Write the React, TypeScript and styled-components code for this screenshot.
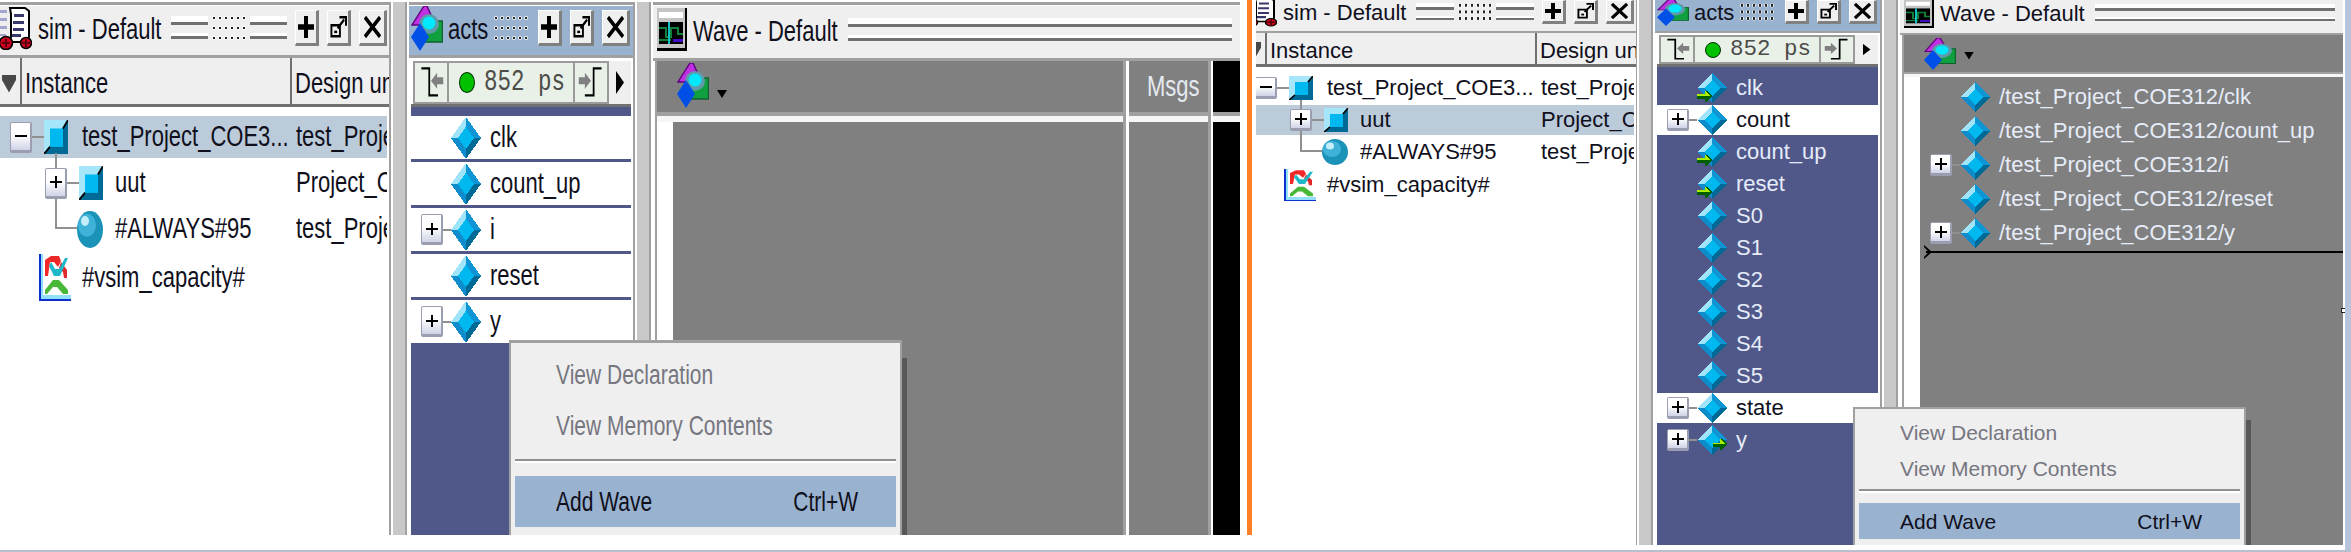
import styled, { createGlobalStyle } from 'styled-components';

const GlobalStyle = createGlobalStyle`
  html, body {
    margin: 0;
    background: #fff;
    overflow: hidden;
  }
  * {
    box-sizing: border-box;
  }
`;

const Root = styled.div`
  width: 2351px;
  height: 552px;
  display: flex;
  flex-direction: column;
  font-family: 'Liberation Sans', Arial, sans-serif;
  font-size: 22px;
  color: #10101c;
`;

const Screens = styled.div`
  flex: 1;
  min-height: 0;
  display: flex;
  align-items: flex-start;
`;

const BottomRule = styled.div`
  height: 2px;
  background: #b8c0d0;
`;

const OrangeBar = styled.div`
  width: 5px;
  height: 535px;
  flex: none;
  background: #ff7f27;
`;

const EdgeStrip = styled.div`
  width: 6px;
  height: 100%;
  flex: none;
  background: #b8c4dc;
`;

const Shot = styled.div<{ $tall?: boolean }>`
  position: relative;
  flex: none;
  display: flex;
  overflow: hidden;
  width: ${p => (p.$tall ? '1247px' : '1093px')};
  height: ${p => (p.$tall ? '535px' : '545px')};
  padding: ${p => (p.$tall ? '2px 7px 0 0' : '0 2px 0 4px')};
`;

const SimClip = styled.div`
  flex: none;
  width: 381px;
  overflow: hidden;
  display: flex;
`;

const Panel = styled.div<{ $tall?: boolean; $w?: number; $shift?: number }>`
  display: flex;
  flex-direction: column;
  flex: ${p => (p.$w ? 'none' : '1')};
  min-width: 0;
  width: ${p => (p.$w ? `${p.$w}px` : 'auto')};
  margin-left: ${p => p.$shift ?? 0}px;
  border-top: ${p => (p.$tall ? '3px solid #a0a0a0' : '0')};
  padding-top: ${p => (p.$tall ? '1px' : '0')};
`;

const SideBordered = styled(Panel)`
  border-right: 2px solid #a0a0a0;
`;

const Sash = styled.div`
  flex: none;
  width: 18px;
  background: linear-gradient(
    to right,
    #fff 0 2px,
    #c8c8c8 2px 14px,
    #a0a0a0 14px 16px,
    #fff 16px
  );
`;

const TitleBar = styled.div<{
  $tall?: boolean;
  $active?: boolean;
  $pad?: number;
  $end?: number;
  $h?: number;
}>`
  flex: none;
  display: flex;
  align-items: center;
  height: ${p => p.$h ?? (p.$tall ? 49 : 31)}px;
  padding: 0 ${p => p.$end ?? 0}px ${p => (p.$tall ? '5px' : '7px')} ${p => p.$pad ?? 0}px;
  background: ${p => (p.$active ? '#98b2cf' : '#efefef')};
`;

const TitleEdge = styled.div<{ $wide?: boolean }>`
  flex: none;
  height: ${p => (p.$wide ? '3px' : '2px')};
  background: #a0a0a0;
`;

const Label = styled.span<{ $tall?: boolean; $at?: number }>`
  display: inline-block;
  flex: none;
  white-space: nowrap;
  margin-left: ${p => p.$at ?? 0}px;
  line-height: 1;
  transform: scaleY(${p => (p.$tall ? 1.32 : 1)});
`;

const TitleText = styled(Label)`
  margin-top: ${p => (p.$tall ? '4px' : '2px')};
`;

const GripLines = styled.div<{ $tall?: boolean }>`
  flex: 1;
  min-width: 0;
  height: ${p => (p.$tall ? '24px' : '18px')};
  background: linear-gradient(
    #fff 0 25%,
    #707070 25% 37%,
    #efefef 37% 72%,
    #fff 72% 83%,
    #707070 83% 95%,
    transparent 95%
  );
`;

const GripDots = styled.div<{ $tall?: boolean }>`
  flex: none;
  width: 36px;
  height: ${p => (p.$tall ? '30px' : '20px')};
  background: radial-gradient(circle, #222 1.1px, #fff 1.3px, transparent 2.4px) 0 0 /
    6px ${p => (p.$tall ? '10px' : '6.6px')};
`;

const Grips = styled.div<{ $gap?: number }>`
  flex: 1;
  min-width: 0;
  display: flex;
  align-items: center;
  gap: 3px;
  margin: 0 8px 0 ${p => p.$gap ?? 10}px;
`;

const WinButtons = styled.div`
  flex: none;
  display: flex;
  gap: 8px;
`;

const WinButton = styled.div<{ $tall?: boolean; $wide?: boolean }>`
  width: ${p => (p.$wide ? '28px' : '24px')};
  height: ${p => (p.$tall ? '36px' : '24px')};
  display: flex;
  align-items: center;
  justify-content: center;
  background: #efefef;
  border-top: 1px solid #fff;
  border-left: 1px solid #fff;
  border-right: 3px solid #808080;
  border-bottom: 3px solid #808080;
`;

const ColumnHeader = styled.div<{ $tall?: boolean }>`
  flex: none;
  display: grid;
  grid-template-columns: 22px 270px 1fr;
  height: ${p => (p.$tall ? '49px' : '34px')};
  border-bottom: 3px solid #707070;
  background: #fff;
`;

const HeaderCell = styled.div<{ $pad?: number }>`
  display: flex;
  align-items: center;
  min-width: 0;
  overflow: hidden;
  padding-left: ${p => p.$pad ?? 3}px;
  padding-top: 5px;
  background: #efefef;
  border-right: 2px solid #707070;
  &:last-child {
    border-right: 0;
  }
`;

const SortMark = styled.div`
  width: 14px;
  height: 18px;
  margin-left: -1px;
  background: #484848;
  clip-path: polygon(0 0, 100% 0, 100% 30%, 50% 100%, 0 30%);
`;

const SimBody = styled.div<{ $tall?: boolean }>`
  flex: 1;
  display: flex;
  flex-direction: column;
  gap: ${p => (p.$tall ? '4px' : '2px')};
  padding-top: ${p => (p.$tall ? '9px' : '6px')};
  padding-right: 2px;
  background: #fff;
`;

const TreeRow = styled.div<{ $tall?: boolean; $sel?: boolean }>`
  position: relative;
  flex: none;
  display: grid;
  grid-template-columns: 296px 1fr;
  align-items: center;
  height: ${p => (p.$tall ? '42px' : '30px')};
  background: ${p => (p.$sel ? '#bccbda' : 'transparent')};
`;

const TreeName = styled.div<{ $indent: number }>`
  display: flex;
  align-items: center;
  padding-left: ${p => p.$indent}px;
`;

const TreeUnit = styled.div`
  height: 100%;
  min-width: 0;
  display: flex;
  align-items: center;
  overflow: hidden;
`;

const Expander = styled.div<{ $tall?: boolean }>`
  position: relative;
  z-index: 1;
  flex: none;
  width: 22px;
  height: ${p => (p.$tall ? '31px' : '22px')};
  display: flex;
  align-items: center;
  justify-content: center;
  border: 1px solid #9a9eb0;
  border-bottom-width: 3px;
  border-right-width: 2px;
  border-radius: 2px;
  background: linear-gradient(#fff 0 45%, #cfd3e6);
`;

const Stub = styled.div`
  flex: none;
  width: 12px;
  height: 2px;
  background: #909090;
`;

const Elbow = styled.div<{ $h: number }>`
  position: absolute;
  left: 55px;
  bottom: 50%;
  width: 22px;
  height: ${p => p.$h}px;
  border-left: 2px solid #909090;
  border-bottom: 2px solid #909090;
`;

const ActsBody = styled.div`
  flex: 1;
  min-height: 0;
  display: flex;
  flex-direction: column;
  padding: 0 2px;
  background: #fff;
`;

const TimeBar = styled.div<{ $tall?: boolean }>`
  flex: none;
  display: flex;
  height: ${p => (p.$tall ? '49px' : '34px')};
  padding: ${p => (p.$tall ? '3px 0 0' : '2px 0 0')};
  border-bottom: 3px solid #707070;
  background: #fff;
`;

const TimeFrame = styled.div`
  flex: none;
  display: grid;
  grid-template-columns: 32px 124px 32px;
  gap: 2px;
  width: 196px;
  margin-left: 2px;
  padding: 2px;
  background: #9a9a9a;
`;

const TimeCell = styled.div<{ $pad?: boolean }>`
  display: flex;
  align-items: center;
  justify-content: ${p => (p.$pad ? 'flex-start' : 'center')};
  gap: 9px;
  padding-left: ${p => (p.$pad ? '10px' : '0')};
  background: #e8f0e8;
`;

const GreenDot = styled.div<{ $tall?: boolean }>`
  flex: none;
  width: 16px;
  height: ${p => (p.$tall ? '21px' : '16px')};
  border-radius: 50%;
  border: 1px solid #003000;
  background: #00c000;
`;

const TimeText = styled(Label)`
  font-family: 'Liberation Mono', 'Courier New', monospace;
  font-size: 22.5px;
  color: #4c4c48;
`;

const MoreArrow = styled.div`
  flex: 1;
  display: flex;
  align-items: center;
  justify-content: center;
  background: #efefef;
`;

const ArrowHead = styled.div<{ $tall?: boolean }>`
  width: 8px;
  height: ${p => (p.$tall ? '23px' : '12px')};
  background: #000;
  clip-path: polygon(0 0, 100% 50%, 0 100%);
`;

const SignalList = styled.div<{ $tall?: boolean }>`
  flex: 1;
  display: flex;
  flex-direction: column;
  gap: ${p => (p.$tall ? '3px' : '2px')};
  padding-top: ${p => (p.$tall ? '9px' : '6px')};
  background: #50588a;
`;

const SignalRow = styled.div<{ $h: number; $on?: boolean }>`
  flex: none;
  display: grid;
  grid-template-columns: 21px 9px 30px 1fr;
  align-items: center;
  height: ${p => p.$h}px;
  padding-left: 10px;
  background: ${p => (p.$on ? '#fff' : 'transparent')};
  color: ${p => (p.$on ? '#10101c' : '#e6ecf8')};
`;

const SignalStub = styled.div`
  height: 2px;
  background: #909090;
`;

const SignalName = styled.div`
  padding-left: 9px;
  white-space: nowrap;
`;

const WaveArea = styled.div`
  flex: 1;
  min-height: 0;
  display: flex;
  margin-left: 2px;
  border-left: 2px solid #a0a0a0;
`;

const WaveColumn = styled.div<{ $w?: number }>`
  position: relative;
  flex: ${p => (p.$w ? 'none' : '1')};
  width: ${p => (p.$w ? `${p.$w}px` : 'auto')};
  min-width: 0;
  display: flex;
  flex-direction: column;
`;

const WaveHead = styled.div<{ $tall?: boolean; $black?: boolean }>`
  flex: none;
  display: flex;
  align-items: center;
  height: ${p => (p.$tall ? '51px' : '37px')};
  background: ${p => (p.$black ? '#000' : '#808080')};
`;

const HeadIcons = styled.div<{ $tall?: boolean }>`
  display: flex;
  align-items: flex-end;
  gap: 8px;
  padding-left: 20px;
  padding-bottom: ${p => (p.$tall ? '2px' : '0')};
`;

const DropMark = styled.div`
  width: 10px;
  height: 8px;
  margin-bottom: 10px;
  background: #000;
  clip-path: polygon(0 0, 100% 0, 50% 100%);
`;

const MsgsText = styled(Label)`
  margin-left: 18px;
  color: #e4eaf0;
`;

const WaveRule = styled.div<{ $tall?: boolean }>`
  flex: none;
  height: ${p => (p.$tall ? '10px' : '5px')};
  background: linear-gradient(#a0a0a0 0 40%, #f6f6f6 40%);
`;

const WaveBody = styled.div<{ $inset?: boolean; $black?: boolean }>`
  flex: 1;
  min-height: 0;
  padding: ${p => (p.$inset ? '3px 0 0 16px' : '0')};
  background: ${p =>
    p.$black
      ? '#000'
      : p.$inset
        ? 'linear-gradient(to right, #fff 16px, #808080 16px)'
        : '#808080'};
`;

const ColumnSash = styled.div<{ $w: number }>`
  flex: none;
  width: ${p => p.$w}px;
  background: linear-gradient(to right, #a0a0a0 0 3px, #fff 3px);
`;

const CursorLine = styled.div`
  position: relative;
  height: 2px;
  margin: 1px 0 0 6px;
  background: #000;
  &::before {
    content: '';
    position: absolute;
    left: -2px;
    top: -6px;
    width: 8px;
    height: 14px;
    background: #000;
    clip-path: polygon(0 0, 100% 50%, 0 100%, 0 85%, 60% 50%, 0 15%);
  }
`;

const ResizeMark = styled.div`
  position: absolute;
  right: -3px;
  top: 273px;
  width: 5px;
  height: 5px;
  background: #fff;
  border: 1px solid #222;
`;

const Menu = styled.div<{ $tall?: boolean }>`
  position: absolute;
  bottom: 0;
  left: ${p => (p.$tall ? '509px' : '601px')};
  top: ${p => (p.$tall ? '340px' : '407px')};
  width: 393px;
  padding: ${p => (p.$tall ? '6px' : '5px')} 4px 0;
  background: #efefef;
  border: 2px solid #a0a0a0;
  border-top-width: ${p => (p.$tall ? '3px' : '2px')};
  border-bottom: 0;
  font-size: 21px;
  &::after {
    content: '';
    position: absolute;
    right: -7px;
    top: ${p => (p.$tall ? '15px' : '11px')};
    bottom: 0;
    width: 5px;
    background: #585858;
  }
`;

const MenuItem = styled.div<{ $tall?: boolean; $hot?: boolean; $off?: boolean }>`
  display: flex;
  align-items: center;
  justify-content: space-between;
  height: ${p => (p.$tall ? '51px' : '36px')};
  padding: 0 38px 0 41px;
  background: ${p => (p.$hot ? '#98b2cf' : 'transparent')};
  color: ${p => (p.$off ? '#767680' : '#10101c')};
`;

const MenuRule = styled.div<{ $tall?: boolean }>`
  height: 4px;
  margin: ${p => (p.$tall ? '8px 0 13px' : '3px 0 10px')};
  border-top: 2px solid #909090;
  border-bottom: 2px solid #fff;
`;

const Glyph = styled.svg`
  display: block;
  flex: none;
`;

type Sized = { w: number; h: number };

function Plus({ w, h }: Sized) {
  return (
    <Glyph width={w} height={h} viewBox="0 0 16 16" preserveAspectRatio="none">
      <path d="M6 0h4v6h6v4h-6v6H6v-6H0V6h6z" fill="#000" />
    </Glyph>
  );
}

function Undock({ w, h }: Sized) {
  return (
    <Glyph width={w} height={h} viewBox="0 0 18 18" preserveAspectRatio="none">
      <path d="M1.5 7.5h9v9h-9z" fill="none" stroke="#000" strokeWidth="2" />
      <path d="M4.5 12h3v2h-3z" fill="#000" />
      <path d="M8 10 15 3M10 1h7v7" fill="none" stroke="#000" strokeWidth="2.2" />
    </Glyph>
  );
}

function Cross({ w, h }: Sized) {
  return (
    <Glyph width={w} height={h} viewBox="0 0 18 18" preserveAspectRatio="none">
      <path d="M1 1 17 17M17 1 1 17" stroke="#000" strokeWidth="3.4" />
    </Glyph>
  );
}

function SmallPlus({ sign }: { sign: string }) {
  return (
    <Glyph width="12" height="12" viewBox="0 0 12 12">
      {sign === '+' && <path d="M5 0h2v12H5z" fill="#000" />}
      <path d="M0 5h12v2H0z" fill="#000" />
    </Glyph>
  );
}

function SimIcon({ w, h }: Sized) {
  return (
    <Glyph width={w} height={h} viewBox="0 0 32 44" preserveAspectRatio="none">
      <path d="M0 4h7v3H0zM0 12h7v3H0zM0 20h7v3H0zM0 28h6v2H0z" fill="#a4a4cc" />
      <path d="M10 2h15l4 3v26l-3 5H9l2-5V8z" fill="#fff" stroke="#000" strokeWidth="2" />
      <path d="M14 8h10v3H14zM13 15h11v3H13zM13 22h11v3H13zM12 28h9v3h-9z" fill="#38386c" />
      <circle cx="6" cy="37" r="6.5" fill="#d00020" stroke="#000" strokeWidth="1.5" />
      <circle cx="26" cy="37" r="5.5" fill="#d00020" stroke="#000" strokeWidth="1.5" />
      <path d="M5 33h2v8H5zM2 36h8v2H2zM25 33h2v8h-2zM22 36h8v2h-8z" fill="#000" opacity="0.55" />
    </Glyph>
  );
}

function ObjectsIcon({ w, h }: Sized) {
  return (
    <Glyph width={w} height={h} viewBox="0 0 32 45" preserveAspectRatio="none">
      <path d="M13 0h3l4 9-8 10H1z" fill="#c030e0" stroke="#600080" strokeWidth="1.4" />
      <path d="M18 15h13.5v21H12z" fill="#10a040" stroke="#106030" strokeWidth="1.4" />
      <circle cx="18" cy="18" r="10" fill="#5e9aa8" />
      <circle cx="18" cy="17" r="6.5" fill="#00e8ff" />
      <path d="M9 17 18 31 9 45 0 31z" fill="#0050e8" />
    </Glyph>
  );
}

function WaveIcon({ w, h }: Sized) {
  return (
    <Glyph width={w} height={h} viewBox="0 0 30 43" preserveAspectRatio="none">
      <path d="M0 0h30v43H0z" fill="#000" />
      <path d="M0 0h28v40H0z" fill="#c4c4c4" />
      <path d="M2 4h24v6H2z" fill="#fff" />
      <path d="M2 14h24v22H2z" fill="#000" />
      <path d="M2 20h7v9h5v-9h7v6h5M2 32h12" fill="none" stroke="#108038" strokeWidth="2" />
      <path d="M11 14h2v22h-2z" fill="#10c0c0" />
      <path d="M16 31h10v3H16z" fill="#4010c0" />
    </Glyph>
  );
}

function Diamond({ w, h, arrow }: Sized & { arrow?: 'left' | 'right' }) {
  return (
    <Glyph
      width={w}
      height={h}
      viewBox="0 0 30 30"
      preserveAspectRatio="none"
      shapeRendering="crispEdges"
    >
      <path d="M15 0 15 8 8 15 0 15z" fill="#9fe4f8" />
      <path d="M15 0 30 15 22 15 15 8z" fill="#1095d4" />
      <path d="M0 15 8 15 15 22 15 30z" fill="#0e8ccb" />
      <path d="M30 15 15 30 15 22 22 15z" fill="#006a96" />
      <path d="M15 7 23 15 15 23 7 15z" fill="#00b8f0" />
      {arrow === 'left' && (
        <g>
          <path d="M0 21h8v-3h2l5 5-5 6H8v-3H0z" fill="#006000" />
          <path d="M0 21h8v-3l5 5H0z" fill="#a8f000" />
        </g>
      )}
      {arrow === 'right' && (
        <g>
          <path d="M16 18h7v-4h2l5 5-5 6h-2v-3h-7z" fill="#006000" />
          <path d="M16 18h7v-4l5 5H16z" fill="#a8f000" />
        </g>
      )}
    </Glyph>
  );
}

function BlockIcon({ w, h }: Sized) {
  return (
    <Glyph width={w} height={h} viewBox="0 0 24 24" preserveAspectRatio="none">
      <path d="M0 0h24L0 24z" fill="#a5e6fa" />
      <path d="M24 0v24H0z" fill="#006a96" />
      <path d="M6 6h13v13H6z" fill="#00b8f0" />
      <path d="M19 6 24 0M6 19 0 24" stroke="#000" strokeWidth="1.6" />
    </Glyph>
  );
}

function SphereIcon({ w, h }: Sized) {
  return (
    <Glyph width={w} height={h} viewBox="0 0 26 26" preserveAspectRatio="none">
      <circle cx="13" cy="13" r="13" fill="#1b92b8" />
      <ellipse cx="10" cy="10" rx="9" ry="8" fill="#3fb2d8" />
      <ellipse cx="8" cy="7" rx="4" ry="3.5" fill="#c4eefa" />
    </Glyph>
  );
}

function CapacityIcon({ w, h }: Sized) {
  return (
    <Glyph width={w} height={h} viewBox="0 0 32 47" preserveAspectRatio="none">
      <path d="M0 0h2v45h30v2H0z" fill="#0a30d0" />
      <path d="M2 0h2v41h28v4H2z" fill="#90e0f8" />
      <path d="M6 6 12 2h8l2 5-3 6-4-5h-4l-2 14H6z" fill="#f02828" />
      <path d="M22 8 28 16v8h-3l-1-6-4-4z" fill="#e02828" />
      <path d="M10 12 15 22h6l8-18h-3l-6 11h-4L12 8z" fill="#20b8c8" />
      <path d="M6 36 14 26h6l9 10v4h-5l-6-7h-4l-6 7H6z" fill="#48b838" />
    </Glyph>
  );
}

function StepBack({ w, h }: Sized) {
  return (
    <Glyph width={w} height={h} viewBox="0 0 32 30" preserveAspectRatio="none">
      <path d="M5 2h9v24h10" fill="none" stroke="#000" strokeWidth="2" />
      <path d="M16 13 23 6v4h7v6h-7v4z" fill="#808080" />
    </Glyph>
  );
}

function StepForward({ w, h }: Sized) {
  return (
    <Glyph width={w} height={h} viewBox="0 0 32 30" preserveAspectRatio="none">
      <path d="M28 2h-9v24H9" fill="none" stroke="#000" strokeWidth="2" />
      <path d="M16 13 9 6v4H2v6h7v4z" fill="#808080" />
    </Glyph>
  );
}

function TitleButtons({ tall }: { tall?: boolean }) {
  const gh = tall ? 22 : 16;
  return (
    <WinButtons>
      <WinButton $tall={tall}>
        <Plus w={16} h={gh} />
      </WinButton>
      <WinButton $tall={tall}>
        <Undock w={17} h={gh} />
      </WinButton>
      <WinButton $tall={tall} $wide>
        <Cross w={17} h={gh} />
      </WinButton>
    </WinButtons>
  );
}

function SimPanel({ tall }: { tall?: boolean }) {
  const box = tall ? { w: 24, h: 34 } : { w: 24, h: 24 };
  return (
    <SideBordered $tall={tall} $w={tall ? 391 : 393} $shift={tall ? 0 : -11}>
      <TitleBar $tall={tall} $end={2}>
        <SimIcon w={32} h={tall ? 44 : 30} />
        <TitleText $tall={tall} $at={6}>sim - Default</TitleText>
        <Grips>
          <GripLines $tall={tall} />
          <GripDots $tall={tall} />
          <GripLines $tall={tall} />
        </Grips>
        <TitleButtons tall={tall} />
      </TitleBar>
      <TitleEdge $wide={tall} />
      <ColumnHeader $tall={tall}>
        <HeaderCell>
          <SortMark />
        </HeaderCell>
        <HeaderCell>
          <Label $tall={tall}>Instance</Label>
        </HeaderCell>
        <HeaderCell>
          <Label $tall={tall}>Design unit</Label>
        </HeaderCell>
      </ColumnHeader>
      <SimBody $tall={tall}>
        <TreeRow $tall={tall} $sel={tall}>
          <TreeName $indent={10}>
            <Expander $tall={tall}>
              <SmallPlus sign="-" />
            </Expander>
            <Stub />
            <BlockIcon {...box} />
            <Label $tall={tall} $at={14}>test_Project_COE3...</Label>
          </TreeName>
          <TreeUnit>
            <Label $tall={tall}>test_Project_COE312</Label>
          </TreeUnit>
        </TreeRow>
        <TreeRow $tall={tall} $sel={!tall}>
          <TreeName $indent={45}>
            <Expander $tall={tall}>
              <SmallPlus sign="+" />
            </Expander>
            <Stub />
            <BlockIcon {...box} />
            <Label $tall={tall} $at={12}>uut</Label>
          </TreeName>
          <TreeUnit>
            <Label $tall={tall}>Project_COE312</Label>
          </TreeUnit>
        </TreeRow>
        <TreeRow $tall={tall}>
          <Elbow $h={tall ? 76 : 52} />
          <TreeName $indent={77}>
            <SphereIcon w={26} h={tall ? 37 : 26} />
            <Label $tall={tall} $at={12}>#ALWAYS#95</Label>
          </TreeName>
          <TreeUnit>
            <Label $tall={tall}>test_Project_COE312</Label>
          </TreeUnit>
        </TreeRow>
        <TreeRow $tall={tall}>
          <TreeName $indent={39}>
            <CapacityIcon w={32} h={tall ? 47 : 32} />
            <Label $tall={tall} $at={11}>#vsim_capacity#</Label>
          </TreeName>
        </TreeRow>
      </SimBody>
    </SideBordered>
  );
}

type Signal = {
  name: string;
  expand?: boolean;
  on?: boolean;
  arrow?: 'left' | 'right';
};

const leftSignals: Signal[] = [
  { name: 'clk', on: true },
  { name: 'count_up', on: true },
  { name: 'i', expand: true, on: true },
  { name: 'reset', on: true },
  { name: 'y', expand: true, on: true },
];

const rightSignals: Signal[] = [
  { name: 'clk', arrow: 'left' },
  { name: 'count', expand: true, on: true },
  { name: 'count_up', arrow: 'left' },
  { name: 'reset', arrow: 'left' },
  { name: 'S0' },
  { name: 'S1' },
  { name: 'S2' },
  { name: 'S3' },
  { name: 'S4' },
  { name: 'S5' },
  { name: 'state', expand: true, on: true },
  { name: 'y', expand: true, arrow: 'right' },
];

const waveSignals: Signal[] = [
  { name: '/test_Project_COE312/clk' },
  { name: '/test_Project_COE312/count_up' },
  { name: '/test_Project_COE312/i', expand: true },
  { name: '/test_Project_COE312/reset' },
  { name: '/test_Project_COE312/y', expand: true },
];

function SignalLine({ s, tall, h, dh }: { s: Signal; tall?: boolean; h: number; dh: number }) {
  return (
    <SignalRow $h={h} $on={s.on}>
      {s.expand ? (
        <Expander $tall={tall}>
          <SmallPlus sign="+" />
        </Expander>
      ) : (
        <span />
      )}
      {s.expand ? <SignalStub /> : <span />}
      <Diamond w={30} h={dh} arrow={s.arrow} />
      <SignalName>
        <Label $tall={tall}>{s.name}</Label>
      </SignalName>
    </SignalRow>
  );
}

function ActsPanel({ tall }: { tall?: boolean }) {
  const signals = tall ? leftSignals : rightSignals;
  return (
    <SideBordered $tall={tall} $w={tall ? 226 : 227}>
      <TitleBar $tall={tall} $active $pad={2} $end={3}>
        <ObjectsIcon w={32} h={tall ? 45 : 28} />
        <TitleText $tall={tall} $at={5}>acts</TitleText>
        <Grips $gap={5}>
          <GripDots $tall={tall} />
        </Grips>
        <TitleButtons tall={tall} />
      </TitleBar>
      <TitleEdge $wide={tall} />
      <ActsBody>
        <TimeBar $tall={tall}>
          <TimeFrame>
            <TimeCell>
              <StepBack w={28} h={tall ? 34 : 24} />
            </TimeCell>
            <TimeCell $pad>
              <GreenDot $tall={tall} />
              <TimeText $tall={tall}>852 ps</TimeText>
            </TimeCell>
            <TimeCell>
              <StepForward w={28} h={tall ? 34 : 24} />
            </TimeCell>
          </TimeFrame>
          <MoreArrow>
            <ArrowHead $tall={tall} />
          </MoreArrow>
        </TimeBar>
        <SignalList $tall={tall}>
          {signals.map(s => (
            <SignalLine key={s.name} s={s} tall={tall} h={tall ? 43 : 30} dh={tall ? 42 : 30} />
          ))}
        </SignalList>
      </ActsBody>
    </SideBordered>
  );
}

function WavePanel({ tall }: { tall?: boolean }) {
  return (
    <Panel $tall={tall}>
      <TitleBar $tall={tall} $pad={4} $h={tall ? 52 : 33}>
        <WaveIcon w={30} h={tall ? 43 : 29} />
        <TitleText $tall={tall} $at={6}>Wave - Default</TitleText>
        <Grips>
          <GripLines $tall={tall} />
        </Grips>
      </TitleBar>
      <TitleEdge $wide={tall} />
      <WaveArea>
        <WaveColumn $w={tall ? 466 : undefined}>
          <WaveHead $tall={tall}>
            <HeadIcons $tall={tall}>
              <ObjectsIcon w={32} h={tall ? 45 : 32} />
              <DropMark />
            </HeadIcons>
          </WaveHead>
          <WaveRule $tall={tall} />
          <WaveBody $inset>
            {!tall &&
              waveSignals.map(s => <SignalLine key={s.name} s={s} h={34} dh={30} />)}
            {!tall && <CursorLine />}
          </WaveBody>
          {!tall && <ResizeMark />}
        </WaveColumn>
        {tall && (
          <>
            <ColumnSash $w={6} />
            <WaveColumn $w={79}>
              <WaveHead $tall>
                <MsgsText $tall>Msgs</MsgsText>
              </WaveHead>
              <WaveRule $tall />
              <WaveBody />
            </WaveColumn>
            <ColumnSash $w={5} />
            <WaveColumn>
              <WaveHead $tall $black />
              <WaveRule $tall />
              <WaveBody $black />
            </WaveColumn>
          </>
        )}
      </WaveArea>
    </Panel>
  );
}

function ContextMenu({ tall }: { tall?: boolean }) {
  return (
    <Menu $tall={tall}>
      <MenuItem $tall={tall} $off>
        <Label $tall={tall}>View Declaration</Label>
      </MenuItem>
      <MenuItem $tall={tall} $off>
        <Label $tall={tall}>View Memory Contents</Label>
      </MenuItem>
      <MenuRule $tall={tall} />
      <MenuItem $tall={tall} $hot>
        <Label $tall={tall}>Add Wave</Label>
        <Label $tall={tall}>Ctrl+W</Label>
      </MenuItem>
    </Menu>
  );
}

function Layout({ tall }: { tall?: boolean }) {
  return (
    <Shot $tall={tall}>
      {tall ? (
        <SimPanel tall />
      ) : (
        <SimClip>
          <SimPanel />
        </SimClip>
      )}
      <Sash />
      <ActsPanel tall={tall} />
      <Sash />
      <WavePanel tall={tall} />
      <ContextMenu tall={tall} />
    </Shot>
  );
}

function App() {
  return (
    <Root>
      <GlobalStyle />
      <Screens>
        <Layout tall />
        <OrangeBar />
        <Layout />
        <EdgeStrip />
      </Screens>
      <BottomRule />
    </Root>
  );
}

export default App;
